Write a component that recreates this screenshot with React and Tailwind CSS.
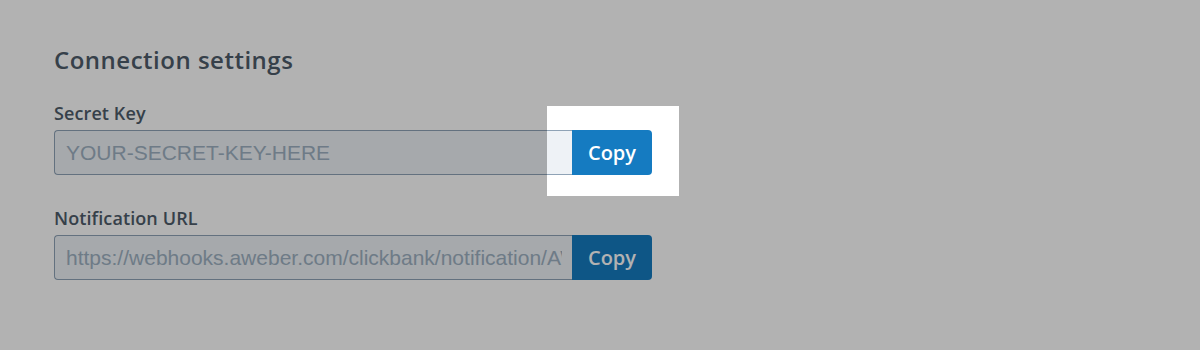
import React from "react";

export default function App() {
  return (
    <div className="min-h-[350px] w-[1200px] bg-white pl-[54px] pt-[44px] font-['Open_Sans',sans-serif]">
      <h2 className="text-[24px] leading-[32px] font-semibold tracking-[0.5px] text-[#4e5c6a]">
        Connection settings
      </h2>

      <div className="mt-[25px]">
        <label className="block text-[18px] leading-[24px] font-semibold tracking-[0.1px] text-[#4e5c6a]">
          Secret Key
        </label>
        <div className="mt-[5px] flex w-[598px]">
          <input
            readOnly
            placeholder="YOUR-SECRET-KEY-HERE"
            className="h-[45px] w-[518px] rounded-l-[4px] border border-r-0 border-[#8fa3b6] bg-[#eef2f6] pl-[11px] pr-[10px] font-['Liberation_Sans',Arial,sans-serif] text-[21px] text-[#9eb1c2] placeholder:text-[#9eb1c2] outline-none"
          />
          <div className="relative">
            <span className="pointer-events-none absolute -left-[25px] -right-[27px] -top-[24px] -bottom-[21px] z-10 shadow-[0_0_0_9999px_rgba(0,0,0,0.3)]" />
            <button className="h-[45px] w-[80px] rounded-r-[4px] bg-[#157bc1] text-[20px] font-semibold text-white">
              Copy
            </button>
          </div>
        </div>
      </div>

      <div className="mt-[31px]">
        <label className="block text-[18px] leading-[24px] font-semibold tracking-[0.1px] text-[#4e5c6a]">
          Notification URL
        </label>
        <div className="mt-[5px] flex w-[598px]">
          <input
            readOnly
            value="https://webhooks.aweber.com/clickbank/notification/AWEBER-ACCOUNT-ID"
            className="h-[45px] w-[518px] rounded-l-[4px] border border-r-0 border-[#8fa3b6] bg-[#eef2f6] pl-[11px] pr-[10px] font-['Liberation_Sans',Arial,sans-serif] text-[21px] text-[#9eb1c2] outline-none"
          />
          <button className="h-[45px] w-[80px] rounded-r-[4px] bg-[#157bc1] text-[20px] font-semibold text-white">
            Copy
          </button>
        </div>
      </div>
    </div>
  );
}
